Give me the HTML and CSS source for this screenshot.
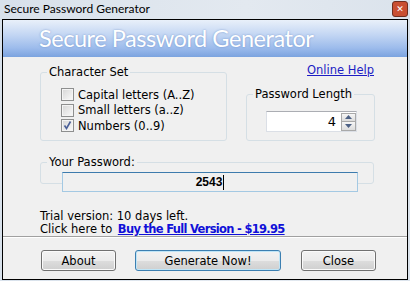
FILE: index.html
```html
<!DOCTYPE html>
<html>
<head>
<meta charset="utf-8">
<link rel="stylesheet" href="styles.css">
</head>
<body>
<div class="window">
  <div class="titlebar">
    <span class="title">Secure Password Generator</span>
    <div class="xbtn"><span class="xglyph">✕</span></div>
  </div>
  <div class="client">
    <div class="banner">Secure Password Generator</div>
    <div class="content">
      <div class="top">
        <fieldset class="group charset">
          <legend>Character Set</legend>
          <div class="check"><span class="box"></span>Capital letters (A..Z)</div>
          <div class="check"><span class="box"></span>Small letters (a..z)</div>
          <div class="check"><span class="box"><svg width="11" height="11" viewBox="0 0 11 11"><path d="M2.5 5.5 L4.5 8.5 L8.5 1.5" fill="none" stroke="#4a5f97" stroke-width="1.6"/></svg></span>Numbers (0..9)</div>
        </fieldset>
        <div class="right">
          <a class="help">Online Help</a>
          <fieldset class="group length">
            <legend>Password Length</legend>
            <div class="spin">
              <span class="val">4</span>
              <span class="arrows">
                <span class="arr up"><svg width="7" height="4" viewBox="0 0 7 4"><path d="M0 4 L3.5 0 L7 4Z" fill="#4d6185"/></svg></span>
                <span class="arr down"><svg width="7" height="4" viewBox="0 0 7 4"><path d="M0 0 L3.5 4 L7 0Z" fill="#4d6185"/></svg></span>
              </span>
            </div>
          </fieldset>
        </div>
      </div>
      <fieldset class="group pass">
        <legend>Your Password:</legend>
        <div class="field"><span class="pw">2543</span><span class="caret"></span></div>
      </fieldset>
      <div class="trial">
        <div>Trial version: 10 days left.</div>
        <div>Click here to <a class="buy">Buy the Full Version - $19.95</a></div>
      </div>
    </div>
    <div class="sep"></div>
    <div class="buttons">
      <button class="btn about">About</button>
      <button class="btn gen">Generate Now!</button>
      <button class="btn closeb">Close</button>
    </div>
  </div>
</div>
</body>
</html>
```

FILE: styles.css
```css
html, body {
  margin: 0;
  padding: 0;
}
body {
  width: 410px;
  height: 281px;
  overflow: hidden;
  font-family: "DejaVu Sans", sans-serif;
  font-size: 11.5px;
  color: #000;
}
.window {
  width: 410px;
  height: 281px;
  box-sizing: border-box;
  padding: 0 2px 1px 2px;
  background: linear-gradient(90deg, #d8e1eb 0%, #e3e9f0 60%, #dbe3ec 100%);
  display: flex;
  flex-direction: column;
}
.titlebar {
  height: 19px;
  display: flex;
  align-items: center;
  justify-content: space-between;
  margin: 0 -2px;
  padding-left: 4px;
  padding-right: 2px;
}
.title {
  font-family: "Lato", sans-serif;
  font-size: 12px;
  line-height: 16px;
  margin-top: -1px;
}
.xbtn {
  flex: 0 0 16px;
  width: 16px;
  height: 16px;
  box-sizing: border-box;
  border: 1px solid #6f2e20;
  border-radius: 3px;
  background-color: #c94f32;
  display: flex;
  align-items: center;
  justify-content: center;
  margin-top: -2px;
}
.xglyph {
  color: #ffffff;
  font-family: "DejaVu Sans", sans-serif;
  font-weight: bold;
  font-size: 9px;
  line-height: 10px;
}
.client {
  flex: 1;
  border: 1px solid #000;
  background: #f0f0f0;
  display: flex;
  flex-direction: column;
}
.banner {
  height: 37px;
  background: linear-gradient(#e9f0fa 0%, #c3d6f3 40%, #9dbcec 75%, #7ba3df 100%);
  color: #fff;
  font-family: "Lato", sans-serif;
  font-size: 23.5px;
  letter-spacing: -0.45px;
  line-height: 37px;
  padding-left: 36px;
  text-shadow: 0 0 2px rgba(70, 110, 180, 0.6);
}
.content {
  flex: 1;
  padding-left: 37px;
}
.top {
  display: flex;
  align-items: flex-start;
}
.group {
  margin: 0;
  box-sizing: border-box;
  border: 1px solid #d5dfe5;
  border-radius: 3px;
  padding: 0 0 0 6px;
  min-width: 0;
}
.group legend {
  padding: 0 2px;
  line-height: 14px;
  margin: 0;
}
.charset {
  margin-top: 8px;
  width: 187px;
  height: 76px;
  padding-top: 8px;
}
.check {
  display: flex;
  align-items: center;
  height: 15.5px;
  margin-left: 14px;
}
.box {
  width: 13px;
  height: 13px;
  box-sizing: border-box;
  border: 1px solid #8e8f8f;
  background: linear-gradient(135deg, #d5d5d5 0%, #e8e8e8 50%, #fafafa 100%);
  box-shadow: inset 0 0 0 1px #f4f4f4;
  margin-right: 4px;
  display: flex;
  align-items: center;
  justify-content: center;
}
.right {
  margin-left: 19px;
  width: 129px;
  display: flex;
  flex-direction: column;
}
.help {
  margin-top: 6px;
  line-height: 14px;
  text-align: right;
  padding-right: 1px;
  color: #1c1cc4;
  text-decoration: underline;
}
.length {
  margin-top: 10px;
  height: 54px;
  padding-top: 10px;
}
.spin {
  margin-left: 13px;
  width: 91px;
  height: 21px;
  box-sizing: border-box;
  border: 1px solid #dbdfe6;
  border-top-color: #abadb3;
  background: #fff;
  display: flex;
  align-items: center;
  justify-content: flex-end;
}
.val {
  font-size: 13px;
  margin-right: 5px;
}
.arrows {
  width: 15px;
  height: 18px;
  display: flex;
  flex-direction: column;
}
.arr {
  flex: 1;
  box-sizing: border-box;
  border: 1px solid #a9a9a9;
  background: linear-gradient(#f6f6f6, #dcdcdc);
  display: flex;
  align-items: center;
  justify-content: center;
}
.arr.down {
  border-top: none;
}
.pass {
  margin-top: 14px;
  width: 334px;
  height: 29px;
  padding-top: 3px;
}
.field {
  margin-left: 15px;
  width: 296px;
  height: 20px;
  box-sizing: border-box;
  border: 1px solid #a4c9e3;
  border-top-color: #3d7bad;
  background: #f0f0f0;
  display: flex;
  align-items: center;
  justify-content: center;
  font-family: "Liberation Sans", sans-serif;
  font-weight: bold;
  font-size: 12px;
}
.caret {
  width: 1px;
  height: 15px;
  background: #000;
  margin-left: 1px;
}
.trial {
  margin-top: 26px;
  line-height: 13px;
}
.buy {
  font-weight: bold;
  color: #1010d8;
  text-decoration: underline;
  letter-spacing: -0.7px;
  margin-left: 2px;
}
.sep {
  height: 1px;
  background: #a0a0a0;
  border-bottom: 1px solid #fff;
  margin-bottom: 12px;
}
.buttons {
  display: flex;
  padding-left: 38px;
  padding-bottom: 8px;
}
.btn {
  font-family: "DejaVu Sans", sans-serif;
  font-size: 11.5px;
  color: #000;
  height: 21px;
  padding: 0;
  border: 1px solid #707070;
  border-radius: 3px;
  background: linear-gradient(#f2f2f2 0%, #ebebeb 50%, #dddddd 51%, #cfcfcf 100%);
  box-shadow: inset 0 0 0 1px #fafafa;
}
.about {
  width: 75px;
}
.gen {
  width: 146px;
  margin-left: 19px;
  border-color: #3c7fb1;
  box-shadow: inset 0 0 0 1px #bfe5f7;
}
.closeb {
  width: 75px;
  margin-left: 20px;
}
```
